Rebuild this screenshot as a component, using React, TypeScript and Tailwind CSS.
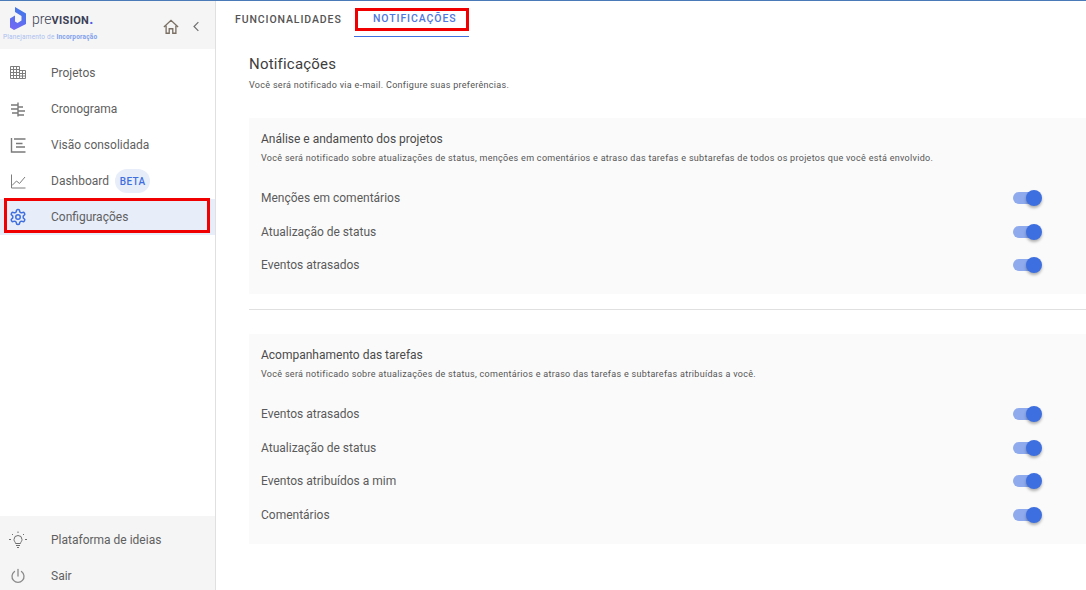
import type { ReactNode } from "react";

const iconClass = "w-[18px] h-[18px] shrink-0";

const BuildingIcon = () => (
    <svg viewBox="0 0 18 18" className={iconClass} fill="none" stroke="#7d7d7d" strokeWidth="1">
        <path d="M1.500 2.500h9v12h-9zM10.500 6.500h6v8h-6M1.500 5.500h9M1.500 8.500h9M1.500 11.500h9M4.500 2.500v12M7.500 2.500v12M10.500 9.500h6M10.500 12h6M13.500 6.500v8" />
    </svg>
);

const GanttIcon = () => (
    <svg viewBox="0 0 18 18" className={iconClass} fill="none" stroke="#7a7a7a" strokeWidth="1.400">
        <path d="M2 5h7M2 9h7M3 13h6M9 2.500v14M9 7h5M9 11h7M9 15h6" />
    </svg>
);

const ConsolidatedIcon = () => (
    <svg viewBox="0 0 18 18" className={iconClass} fill="none" stroke="#7a7a7a" strokeWidth="1.400">
        <path d="M2.500 2v14h14M5 3h11.500M7 7.500h6.500M7 11h9" />
    </svg>
);

const ChartIcon = () => (
    <svg viewBox="0 0 18 18" className={iconClass} fill="none" stroke="#7d7d7d" strokeWidth="1">
        <path d="M2.500 2.500v13.500h14" />
        <path d="M3 13.500l4.500-4.500 3 2.500 5.500-6.500" />
    </svg>
);

const GearIcon = () => (
    <svg viewBox="0 0 24 24" className="w-[18px] h-[18px] shrink-0" fill="none" stroke="#3f6fdf" strokeWidth="2" strokeLinecap="round" strokeLinejoin="round">
        <path d="M12.220 2h-.44a2 2 0 0 0-2 2v.18a2 2 0 0 1-1 1.730l-.43.25a2 2 0 0 1-2 0l-.15-.08a2 2 0 0 0-2.730.73l-.22.38a2 2 0 0 0 .73 2.730l.15.1a2 2 0 0 1 1 1.720v.51a2 2 0 0 1-1 1.740l-.15.09a2 2 0 0 0-.73 2.730l.22.38a2 2 0 0 0 2.730.73l.15-.08a2 2 0 0 1 2 0l.43.25a2 2 0 0 1 1 1.730V20a2 2 0 0 0 2 2h.44a2 2 0 0 0 2-2v-.18a2 2 0 0 1 1-1.730l.43-.25a2 2 0 0 1 2 0l.15.08a2 2 0 0 0 2.730-.73l.22-.39a2 2 0 0 0-.73-2.730l-.15-.08a2 2 0 0 1-1-1.740v-.5a2 2 0 0 1 1-1.740l.15-.09a2 2 0 0 0 .73-2.730l-.22-.38a2 2 0 0 0-2.730-.73l-.15.08a2 2 0 0 1-2 0l-.43-.25a2 2 0 0 1-1-1.730V4a2 2 0 0 0-2-2z" />
        <circle cx="12" cy="12" r="3" />
    </svg>
);

const BulbIcon = () => (
    <svg viewBox="0 0 18 18" className={iconClass} fill="none" stroke="#6f6f6f" strokeWidth="1">
        <path d="M6.500 12.500c0-1.500-1.500-2-1.500-4a4 4 0 0 1 8 0c0 2-1.500 2.500-1.500 4zM7 14.500h4M8 16.500h2" />
        <path d="M0 8.500h2M16 8.500h2M3 3l1 1M15 3l-1 1M9 .5v1.500" />
    </svg>
);

const PowerIcon = () => (
    <svg viewBox="0 0 18 18" className={iconClass} fill="none" stroke="#8a8a8a" strokeWidth="1.300" strokeLinecap="round">
        <path d="M9 2.500v6.500" />
        <path d="M5.500 4.500a6 6 0 1 0 7 0" />
    </svg>
);

const HomeIcon = () => (
    <svg viewBox="0 0 18 18" className="w-[16px] h-[16px]" fill="none" stroke="#7b6f63" strokeWidth="1.500">
        <path d="M1 9l8-7.500 8 7.500M3.500 7.500v8.500h3.500v-5h4v5h3.500v-8.500" />
    </svg>
);

const ChevronLeft = () => (
    <svg viewBox="0 0 10 14" className="w-[8px] h-[11px]" fill="none" stroke="#6f6f6f" strokeWidth="1.500">
        <path d="M8 1.500L2.500 7 8 12.500" />
    </svg>
);

const LogoMark = () => (
    <svg viewBox="0 0 16 23" className="w-[16px] h-[23px] shrink-0">
        <defs>
            <linearGradient id="logoGrad" x1="0.600" y1="0" x2="0.300" y2="1">
                <stop offset="0" stopColor="#3f78e8" />
                <stop offset="1" stopColor="#7468f5" />
            </linearGradient>
        </defs>
        <path d="M5 0l11 6.500v10.500L4 23l-4-2.500v-9l5-3v6l2.500 1.500 4-2.500V9L5 5z" fill="url(#logoGrad)" />
    </svg>
);

type NavItemProps = {
    icon: ReactNode;
    label: string;
    active?: boolean;
    children?: ReactNode;
};

const NavItem = ({ icon, label, active, children }: NavItemProps) => (
    <div className={`h-9 flex items-center pl-[9px] ${active ? "bg-[#e7edf9]" : ""}`}>
        <div className="w-[42px] flex">{icon}</div>
        <span className="text-[12px] text-[#5f5f5f]">{label}</span>
        {children}
    </div>
);

const Toggle = () => (
    <div className="relative w-[28px] h-[12px] rounded-full bg-[#8fabee]">
        <div className="absolute right-[-1px] top-[-2px] w-[16px] h-[16px] rounded-full bg-[#3d6fe0] shadow-[0_2px_3px_rgba(0,0,0,0.3)]" />
    </div>
);

const Row = ({ label }: { label: string }) => (
    <div className="h-[33.700px] flex items-center justify-between pr-[45px]">
        <span className="text-[12px] text-[#5a5a5a]">{label}</span>
        <Toggle />
    </div>
);

type PanelProps = {
    title: string;
    description: string;
    rows: string[];
    className: string;
};

const Panel = ({ title, description, rows, className }: PanelProps) => (
    <section className={`bg-[#fafafa] pl-3 pt-[14px] ${className}`}>
        <h3 className="text-[12px] text-[#4a4a4a] leading-[15px]">{title}</h3>
        <p className="text-[9px] text-[#555] tracking-[0.3px] leading-[12px] mt-[5px]">{description}</p>
        <div className="mt-[17px]">
            {rows.map((row) => (
                <Row key={row} label={row} />
            ))}
        </div>
    </section>
);

const App = () => {
    return (
        <div className="relative w-[1086px] h-[590px] overflow-hidden bg-white border-t border-[#4a7ab8] flex font-['Roboto',sans-serif]">
            <aside className="w-[216px] shrink-0 border-r border-[#e0e0e0] flex flex-col">
                <div className="h-[48px] bg-[#f5f5f5] flex justify-between pl-[3px] pr-[15px]">
                    <div className="pt-[6px]">
                        <div className="flex items-center gap-[6px] pl-[7px]">
                            <LogoMark />
                            <span className="text-[14px] font-light text-[#3a3f55] leading-none">
                                pre<span className="text-[11px] font-bold tracking-[0.3px]">VISION</span><span className="text-[#4a56e8] font-bold">.</span>
                            </span>
                        </div>
                        <p className="text-[6.500px] text-[#a9bdf0] tracking-[0.2px] leading-none mt-[4px]">
                            Planejamento de <span className="font-bold text-[#7f9fee]">Incorporação</span>
                        </p>
                    </div>
                    <div className="flex items-center gap-[13px] pt-[3px]">
                        <HomeIcon />
                        <ChevronLeft />
                    </div>
                </div>
                <nav className="pt-[6px]">
                    <NavItem icon={<BuildingIcon />} label="Projetos" />
                    <NavItem icon={<GanttIcon />} label="Cronograma" />
                    <NavItem icon={<ConsolidatedIcon />} label="Visão consolidada" />
                    <NavItem icon={<ChartIcon />} label="Dashboard">
                        <span className="ml-[6px] h-6 w-[35px] rounded-full bg-[#e7edf9] text-[#3f6fdf] text-[10px] font-medium tracking-[0.3px] flex items-center justify-center">BETA</span>
                    </NavItem>
                    <NavItem icon={<GearIcon />} label="Configurações" active />
                </nav>
                <div className="mt-auto bg-[#f5f5f5] pt-[6px] h-[74px]">
                    <NavItem icon={<BulbIcon />} label="Plataforma de ideias" />
                    <NavItem icon={<PowerIcon />} label="Sair" />
                </div>
            </aside>
            <main className="flex-1 min-w-0">
                <div className="h-9 flex">
                    <div className="w-[138px] pl-[19px] pt-[1px] flex items-center text-[10.500px] font-medium text-[#555] tracking-[0.9px]">FUNCIONALIDADES</div>
                    <div className="w-[115px] pl-[19px] pt-[1px] flex items-center text-[10.500px] font-medium text-[#4f78e0] tracking-[0.9px] border-b border-[#3d6fe0]">NOTIFICAÇÕES</div>
                </div>
                <div className="pl-[33px]">
                    <h2 className="text-[15px] text-[#3d3d3d] tracking-[0.2px] leading-[20px] mt-[17px]">Notificações</h2>
                    <p className="text-[9px] text-[#555] tracking-[0.3px] leading-[12px] mt-[5px]">Você será notificado via e-mail. Configure suas preferências.</p>
                    <Panel
                        className="mt-[27px] h-[176px]"
                        title="Análise e andamento dos projetos"
                        description="Você será notificado sobre atualizações de status, menções em comentários e atraso das tarefas e subtarefas de todos os projetos que você está envolvido."
                        rows={["Menções em comentários", "Atualização de status", "Eventos atrasados"]}
                    />
                    <hr className="mt-[15px] border-[#e0e0e0]" />
                    <Panel
                        className="mt-[24px] h-[210px]"
                        title="Acompanhamento das tarefas"
                        description="Você será notificado sobre atualizações de status, comentários e atraso das tarefas e subtarefas atribuídas a você."
                        rows={["Eventos atrasados", "Atualização de status", "Eventos atribuídos a mim", "Comentários"]}
                    />
                </div>
            </main>
            <div className="absolute left-[4px] top-[197px] w-[206px] h-[35px] border-[3px] border-[#f00000]" />
            <div className="absolute left-[355px] top-[7px] w-[114px] h-[23px] border-[3px] border-[#f00000]" />
        </div>
    );
};

export default App;
